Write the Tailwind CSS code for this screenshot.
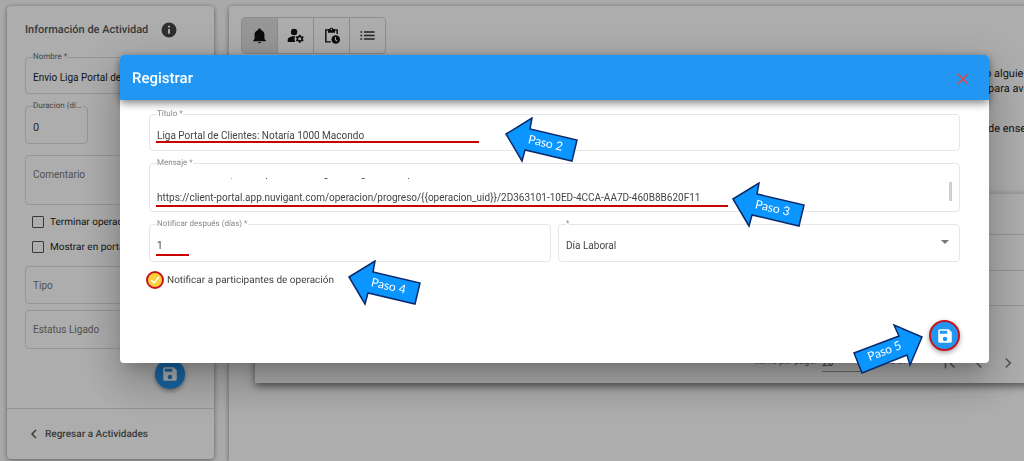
<!DOCTYPE html>
<html lang="es">
<head>
<meta charset="utf-8">
<meta name="viewport" content="width=device-width, initial-scale=1">
<title>Registrar</title>
<script src="https://cdn.jsdelivr.net/npm/@tailwindcss/browser@4"></script>
</head>
<body class="relative h-screen overflow-hidden bg-[#fafafa] font-['Roboto',sans-serif] text-[10px] text-[#222] [text-rendering:geometricPrecision]">

<svg class="hidden">
  <symbol id="save" viewBox="0 0 24 24"><path fill="currentColor" d="M17 3H5a2 2 0 0 0-2 2v14a2 2 0 0 0 2 2h14a2 2 0 0 0 2-2V7zm-5 16a3 3 0 1 1 0-6 3 3 0 0 1 0 6zm3-10H5V5h10z"/></symbol>
  <symbol id="arrow" viewBox="0 0 74 46"><path fill="#0a95ff" stroke="#0b2a6b" stroke-width="1.5" d="M2 17 28 1 26 12 73 23 68 44 21 33 18 44Z"/></symbol>
</svg>

<div class="flex h-full items-start gap-[15px] pt-[6px] pl-[7px]">
  <aside class="w-[207px] shrink-0 rounded bg-white shadow-[0_1px_5px_rgba(0,0,0,.45)]">
    <form class="px-[18px]">
      <div class="flex h-[46px] items-center gap-3 pt-[2px]">
        <h2 class="text-[11px] font-medium text-[#555] whitespace-nowrap">Información de Actividad</h2>
        <svg class="size-[18px] shrink-0 text-[#444]" viewBox="0 0 24 24"><path fill="currentColor" d="M12 2a10 10 0 1 0 0 20 10 10 0 0 0 0-20zm1.300 15h-2.600v-6.500h2.600zm0-8.200h-2.600V6.300h2.600z"/></svg>
      </div>
      <fieldset class="h-[42px] rounded border border-[#ddd] px-[7px]">
        <legend class="text-[8px] leading-[10px] text-[#666]"><label for="nombre">Nombre *</label></legend>
        <input id="nombre" class="block h-[31px] w-full outline-none" value="Envio Liga Portal de Clientes">
      </fieldset>
      <fieldset class="mt-[7px] h-[43px] w-[63px] rounded border border-[#ddd] pr-1 pl-[7px]">
        <legend class="text-[8px] leading-[10px] text-[#666]"><label for="duracion" class="block w-[50px] truncate">Duracion (días)</label></legend>
        <input id="duracion" class="block h-8 w-full text-[11px] text-[#444] outline-none" value="0">
      </fieldset>
      <textarea aria-label="Comentario" placeholder="Comentario" class="mt-[11px] block h-[50px] w-full resize-none rounded border border-[#ddd] px-[7px] pt-[11px] leading-4 outline-none placeholder:text-[#777]"></textarea>
      <label class="mt-[9px] ml-[7px] flex h-4 items-center gap-[6px] whitespace-nowrap"><input type="checkbox" class="size-3 shrink-0 appearance-none rounded-[1px] border-[1.500px] border-[#555]">Terminar operación</label>
      <label class="mt-[9px] ml-[7px] flex h-4 items-center gap-[6px] whitespace-nowrap"><input type="checkbox" class="size-3 shrink-0 appearance-none rounded-[1px] border-[1.500px] border-[#555]">Mostrar en portal</label>
      <select aria-label="Tipo" class="mt-[11px] block h-[38px] w-full appearance-none rounded border border-[#ddd] px-[7px] text-[#777]"><option>Tipo</option></select>
      <select aria-label="Estatus Ligado" class="mt-[6px] block h-[39px] w-full appearance-none rounded border border-[#ddd] px-[7px] text-[#777]"><option>Estatus Ligado</option></select>
      <div class="flex justify-end pt-[10px] pr-[11px] pb-[19px]">
        <button type="button" aria-label="Guardar" class="flex size-[30px] items-center justify-center rounded-full bg-[#2196f3] text-white shadow-[0_2px_4px_rgba(0,0,0,.4)]"><svg class="size-[18px]"><use href="#save"/></svg></button>
      </div>
    </form>
    <a href="#" class="flex h-[51px] items-center gap-[5px] border-t border-[#d8d8d8] pl-[21px] font-medium text-[#555]">
      <svg class="size-3" viewBox="0 0 12 12"><path fill="none" stroke="currentColor" stroke-width="1.500" d="M8 2 4 6l4 4"/></svg>Regresar a Actividades</a>
  </aside>

  <main class="-mr-4 min-w-0 flex-1 self-stretch overflow-hidden rounded-t bg-white pt-[11px] pl-3 shadow-[0_1px_5px_rgba(0,0,0,.45)]">
    <div class="flex h-[37px] w-[145px] divide-x divide-[#d0d0d0] overflow-hidden rounded border border-[#d0d0d0] text-[#111]">
      <button aria-label="Notificaciones" class="flex flex-1 items-center justify-center bg-[#dedede]"><svg class="size-[17px]" viewBox="0 0 24 24"><path fill="currentColor" d="M21 19v1H3v-1l2-2v-6c0-3.100 2-5.800 5-6.700V4a2 2 0 0 1 4 0v.3c3 .9 5 3.600 5 6.700v6zm-7 2a2 2 0 0 1-4 0"/></svg></button>
      <button aria-label="Responsables" class="flex flex-1 items-center justify-center"><svg class="size-[17px]" viewBox="0 0 24 24"><circle cx="10" cy="7" r="4.500" fill="currentColor"/><path fill="currentColor" d="M10 13c-4.500 0-9 1.800-9 5v3h10.500a7.500 7.500 0 0 1 .3-8z"/><path fill="currentColor" fill-rule="evenodd" d="m16.800 11-.3 1.600-1.300.8-1.600-.6-1.200 2 1.300 1.100v1.500l-1.300 1.100 1.200 2 1.600-.6 1.300.8.3 1.600h2.400l.3-1.600 1.300-.8 1.600.6 1.200-2-1.300-1.100v-1.500l1.300-1.100-1.200-2-1.600.6-1.300-.8-.3-1.600zM18 14.400a2.200 2.200 0 1 1 0 4.400 2.200 2.200 0 0 1 0-4.400"/></svg></button>
      <button aria-label="Pendientes" class="flex flex-1 items-center justify-center"><svg class="size-[17px]" viewBox="0 0 24 24"><path fill="none" stroke="currentColor" stroke-width="2" d="M11 21H4V4h16v6"/><path fill="currentColor" d="M7 3h2.200a3 3 0 0 1 5.600 0H17v5H7z"/><circle cx="12" cy="3.500" r="1" fill="#fff"/><circle cx="18" cy="17.500" r="6" fill="currentColor"/><path fill="none" stroke="#fff" stroke-width="1.500" d="M17.500 14v4l2.500 2"/></svg></button>
      <button aria-label="Lista" class="flex flex-1 items-center justify-center text-[#333]"><svg class="size-[17px]" viewBox="0 0 24 24"><path fill="none" stroke="currentColor" stroke-width="2" d="M7 7h15M7 12h15M7 17h15M2 7h2.500M2 12h2.500M2 17h2.500"/></svg></button>
    </div>
    <div class="ml-[744px] pt-3 text-[11px] leading-[15px] whitespace-nowrap text-[#222]">
      <p>o alguien más</p>
      <p class="pl-[3px]">para avisar</p>
      <p class="pt-[25px] pl-[3px]">de enseguida</p>
    </div>
    <section class="mt-[58px] ml-[14px] h-[189px] shadow-[0_3px_8px_rgba(0,0,0,.55)]">
      <div class="h-[41px] border-b border-[#ddd]"></div>
      <div class="h-[36px] border-b border-[#ddd]"></div>
      <div class="h-[35px] border-b border-[#ddd]"></div>
      <div class="flex items-center pt-[48px] pr-4 text-[9px] text-[#777]">
        <label for="items" class="ml-auto pr-[6px]">Items per page:</label>
        <select id="items" class="h-[18px] w-[44px] appearance-none border-b border-[#999] text-[10px] text-[#444]"><option>20</option></select>
        <span class="pr-7 pl-6">6 of 6</span>
        <button aria-label="Primera" class="mr-[11px]"><svg class="size-[18px]" viewBox="0 0 24 24"><path fill="none" stroke="currentColor" stroke-width="2" d="M6 5v14M18 6l-6 6 6 6"/></svg></button>
        <button aria-label="Anterior" class="mr-[11px]"><svg class="size-[18px]" viewBox="0 0 24 24"><path fill="none" stroke="currentColor" stroke-width="2" d="m15 6-6 6 6 6"/></svg></button>
        <button aria-label="Siguiente" class="mr-[7px]"><svg class="size-[18px]" viewBox="0 0 24 24"><path fill="none" stroke="currentColor" stroke-width="2" d="m9 6 6 6-6 6"/></svg></button>
      </div>
    </section>
  </main>
</div>

<div class="fixed inset-0 bg-black/32 pt-[55px] pr-[35px] pl-[120px]">
  <div role="dialog" aria-labelledby="titulo-dialogo" class="relative rounded bg-white text-[#444] shadow-[0_11px_15px_-7px_rgba(0,0,0,.2),0_24px_38px_3px_rgba(0,0,0,.14),0_9px_46px_8px_rgba(0,0,0,.12)]">
    <header class="flex h-[45px] items-center justify-between rounded-t bg-[#2196f3] pt-[2px] pr-5 pl-3 shadow-[0_3px_8px_rgba(0,0,0,.5)]">
      <h1 id="titulo-dialogo" class="text-[15px] font-medium text-white">Registrar</h1>
      <button aria-label="Cerrar" class="text-[#e9453d]"><svg class="size-3" viewBox="0 0 12 12"><path fill="none" stroke="currentColor" stroke-width="1.500" d="m1 1 10 10M11 1 1 11"/></svg></button>
    </header>
    <form class="px-[29px] pt-[9px] pb-3">
      <fieldset class="relative h-[42px] rounded border border-[#e6e6e6] px-[7px]">
        <legend class="text-[8px] leading-[10px] text-[#888]"><label for="titulo">Título *</label></legend>
        <input id="titulo" class="block h-8 w-full outline-none" value="Liga Portal de Clientes: Notaría 1000 Macondo">
        <span class="absolute bottom-[7px] left-[6px] h-[2px] w-[323px] bg-[#c80000]"></span>
      </fieldset>
      <fieldset class="relative mt-[7px] h-[54px] rounded border border-[#e6e6e6] px-[7px]">
        <legend class="text-[8px] leading-[10px] text-[#888]"><label for="mensaje">Mensaje *</label></legend>
        <textarea id="mensaje" class="mt-[10px] block h-[28px] w-full resize-none overflow-hidden leading-3 outline-none">Estimado cliente, le compartimos la liga de seguimiento para

https://client-portal.app.nuvigant.com/operacion/progreso/{{operacion_uid}}/2D363101-10ED-4CCA-AA7D-460B8B620F11


</textarea>
        <span class="absolute bottom-1 left-[6px] h-[2px] w-[572px] bg-[#c80000]"></span>
        <span class="absolute right-[7px] bottom-[10px] h-[19px] w-[3px] bg-[#d0d0d0]"></span>
      </fieldset>
      <div class="mt-[7px] flex gap-[7px]">
        <fieldset class="relative h-[43px] min-w-0 flex-1 rounded border border-[#e6e6e6] px-[7px]">
          <legend class="text-[8px] leading-[10px] text-[#888]"><label for="dias">Notificar después (días) *</label></legend>
          <input id="dias" class="block h-8 w-full outline-none" value="1">
          <span class="absolute bottom-[5px] left-[6px] h-[2px] w-[33px] bg-[#c80000]"></span>
        </fieldset>
        <fieldset class="relative h-[43px] min-w-0 flex-1 rounded border border-[#e6e6e6] px-[7px]">
          <legend class="text-[8px] leading-[10px] text-[#888]"><label for="tipo-dia">*</label></legend>
          <select id="tipo-dia" class="block h-8 w-full appearance-none outline-none"><option>Día Laboral</option></select>
          <svg class="pointer-events-none absolute right-[10px] bottom-[17px] h-1 w-2" viewBox="0 0 8 4"><path fill="#777" d="M0 0h8L4 4z"/></svg>
        </fieldset>
      </div>
      <label class="mt-[9px] flex items-center gap-[3px]">
        <span class="-ml-[3px] grid size-[18px] place-items-center rounded-full border-2 border-[#c4161c] bg-[#fdd03b]">
          <input type="checkbox" checked class="col-start-1 row-start-1 size-3 appearance-none">
          <svg class="pointer-events-none col-start-1 row-start-1 size-3" viewBox="0 0 12 12"><path fill="none" stroke="#fff" stroke-width="1.500" d="m2 6 3 3 5-6"/></svg>
        </span>Notificar a participantes de operación
      </label>
      <div class="flex justify-end pt-[31px]">
        <button type="button" aria-label="Guardar registro" class="flex size-[31px] items-center justify-center rounded-full border-2 border-[#c4161c] bg-[#2196f3] text-white shadow-[0_2px_5px_rgba(0,0,0,.35)]"><svg class="size-[18px]"><use href="#save"/></svg></button>
      </div>
    </form>

    <!-- Step callouts pointing at the fields -->
    <div class="absolute top-[62px] left-[384px] h-[46px] w-[74px]"><svg class="size-full"><use href="#arrow"/></svg><span class="absolute top-[18px] left-[24px] rotate-[13deg] font-['Lato',sans-serif] text-[12px] leading-4 whitespace-nowrap text-white">Paso 2</span></div>
    <div class="absolute top-[127px] left-[611px] h-[46px] w-[74px]"><svg class="size-full"><use href="#arrow"/></svg><span class="absolute top-[18px] left-[24px] rotate-[13deg] font-['Lato',sans-serif] text-[12px] leading-4 whitespace-nowrap text-white">Paso 3</span></div>
    <div class="absolute top-[205px] left-[227px] h-[46px] w-[74px]"><svg class="size-full"><use href="#arrow"/></svg><span class="absolute top-[18px] left-[24px] rotate-[13deg] font-['Lato',sans-serif] text-[12px] leading-4 whitespace-nowrap text-white">Paso 4</span></div>
    <div class="absolute top-[269px] right-[66px] h-[50px] w-[70px]"><svg class="size-full" viewBox="0 0 70 50"><path fill="#0a95ff" stroke="#0b2a6b" stroke-width="1.500" d="M69 13 41 1 46 12 1 29 9 49 54 31 57 41Z"/></svg><span class="absolute top-[19px] left-[14px] -rotate-[21deg] font-['Lato',sans-serif] text-[12px] leading-4 whitespace-nowrap text-white">Paso 5</span></div>
  </div>
</div>
<script>document.getElementById('mensaje').scrollTop = 10;</script>
</body>
</html>
